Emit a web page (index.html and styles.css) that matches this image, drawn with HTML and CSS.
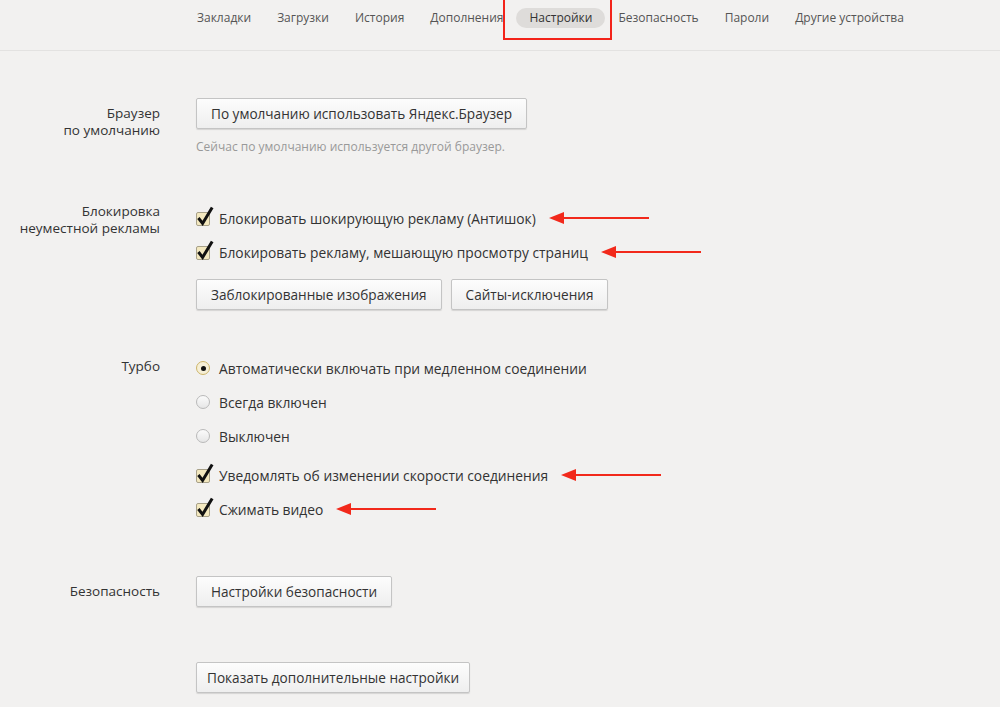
FILE: index.html
```html
<!DOCTYPE html>
<html lang="ru">
<head>
    <meta charset="UTF-8">
    <title>Настройки</title>
    <link rel="stylesheet" href="styles.css">
</head>
<body>
    <!-- Tabs -->
    <div class="tabs">
        <span class="tab">Закладки</span>
        <span class="tab">Загрузки</span>
        <span class="tab">История</span>
        <span class="tab">Дополнения</span>
        <span class="tab active">Настройки<span class="highlight"></span></span>
        <span class="tab">Безопасность</span>
        <span class="tab">Пароли</span>
        <span class="tab">Другие устройства</span>
    </div>

    <div class="settings">
        <!-- Default browser -->
        <div class="section sec-default">
            <div class="label">Браузер<br>по умолчанию</div>
            <div class="controls">
                <button class="btn">По умолчанию использовать Яндекс.Браузер</button>
                <div class="hint">Сейчас по умолчанию используется другой браузер.</div>
            </div>
        </div>

        <!-- Ad blocking -->
        <div class="section sec-ads">
            <div class="label">Блокировка<br>неуместной рекламы</div>
            <div class="controls">
                <div class="option">
                    <span class="check"><svg width="18" height="20" viewBox="0 0 18 20"><rect x="0.5" y="6.5" width="13" height="13" rx="1.5" fill="#f3e8bf" stroke="#a8a189"/><path d="M2.4 12 L6.6 17.4 L16.2 1.4" fill="none" stroke="#111" stroke-width="3"/></svg></span>
                    Блокировать шокирующую рекламу (Антишок)
                    <span class="arrow"><svg width="100" height="14" viewBox="0 0 100 14"><line x1="12" y1="7" x2="100" y2="7" stroke="#f2291b" stroke-width="2.2"/><polygon points="0,7 15,1 15,13" fill="#f2291b"/></svg></span>
                </div>
                <div class="option">
                    <span class="check"><svg width="18" height="20" viewBox="0 0 18 20"><rect x="0.5" y="6.5" width="13" height="13" rx="1.5" fill="#f3e8bf" stroke="#a8a189"/><path d="M2.4 12 L6.6 17.4 L16.2 1.4" fill="none" stroke="#111" stroke-width="3"/></svg></span>
                    Блокировать рекламу, мешающую просмотру страниц
                    <span class="arrow"><svg width="100" height="14" viewBox="0 0 100 14"><line x1="12" y1="7" x2="100" y2="7" stroke="#f2291b" stroke-width="2.2"/><polygon points="0,7 15,1 15,13" fill="#f2291b"/></svg></span>
                </div>
                <div class="btn-row">
                    <button class="btn">Заблокированные изображения</button>
                    <button class="btn">Сайты-исключения</button>
                </div>
            </div>
        </div>

        <!-- Turbo -->
        <div class="section sec-turbo">
            <div class="label">Турбо</div>
            <div class="controls">
                <div class="option"><span class="radio checked"></span>Автоматически включать при медленном соединении</div>
                <div class="option"><span class="radio"></span>Всегда включен</div>
                <div class="option"><span class="radio"></span>Выключен</div>
                <div class="option gap-top">
                    <span class="check"><svg width="18" height="20" viewBox="0 0 18 20"><rect x="0.5" y="6.5" width="13" height="13" rx="1.5" fill="#f3e8bf" stroke="#a8a189"/><path d="M2.4 12 L6.6 17.4 L16.2 1.4" fill="none" stroke="#111" stroke-width="3"/></svg></span>
                    Уведомлять об изменении скорости соединения
                    <span class="arrow"><svg width="100" height="14" viewBox="0 0 100 14"><line x1="12" y1="7" x2="100" y2="7" stroke="#f2291b" stroke-width="2.2"/><polygon points="0,7 15,1 15,13" fill="#f2291b"/></svg></span>
                </div>
                <div class="option">
                    <span class="check"><svg width="18" height="20" viewBox="0 0 18 20"><rect x="0.5" y="6.5" width="13" height="13" rx="1.5" fill="#f3e8bf" stroke="#a8a189"/><path d="M2.4 12 L6.6 17.4 L16.2 1.4" fill="none" stroke="#111" stroke-width="3"/></svg></span>
                    Сжимать видео
                    <span class="arrow"><svg width="100" height="14" viewBox="0 0 100 14"><line x1="12" y1="7" x2="100" y2="7" stroke="#f2291b" stroke-width="2.2"/><polygon points="0,7 15,1 15,13" fill="#f2291b"/></svg></span>
                </div>
            </div>
        </div>

        <!-- Security -->
        <div class="section sec-security">
            <div class="label">Безопасность</div>
            <div class="controls">
                <button class="btn">Настройки безопасности</button>
            </div>
        </div>

        <div class="section sec-more">
            <div class="label"></div>
            <div class="controls">
                <button class="btn btn-compact">Показать дополнительные настройки</button>
            </div>
        </div>
    </div>
</body>
</html>
```

FILE: styles.css
```css
/* Reset */
* {
    margin: 0;
    padding: 0;
    box-sizing: border-box;
}

body {
    background-color: #f2f1f0;
    color: #333;
    font-family: "Open Sans", "Noto Sans", sans-serif;
    font-size: 13.8px;
}

/* Tabs */
.tabs {
    display: flex;
    align-items: flex-start;
    height: 51px;
    padding: 8px 0 0 184px;
    border-bottom: 1px solid #e3e2e1;
}

.tab {
    position: relative;
    height: 20px;
    line-height: 20px;
    padding: 0 13px;
    font-size: 12px;
    color: #555;
    border-radius: 10px;
}

.tab.active {
    background-color: #dedcda;
    color: #333;
}

.highlight {
    position: absolute;
    left: -13px;
    right: -7px;
    top: -12px;
    bottom: -12px;
    border: 2px solid #f3231a;
}

/* Sections */
.settings {
    padding-bottom: 20px;
}

.section {
    display: grid;
    grid-template-columns: 160px 1fr;
    column-gap: 36px;
}

.label {
    text-align: right;
    line-height: 17px;
    font-size: 13.5px;
    color: #333;
}

.sec-default {
    margin-top: 47px;
}

.sec-default .label {
    padding-top: 7px;
}

.sec-ads {
    margin-top: 46px;
}

.sec-ads .label {
    padding-top: 2px;
}

.sec-turbo {
    margin-top: 41px;
}

.sec-turbo .label,
.sec-security .label {
    padding-top: 7px;
}

.sec-security {
    margin-top: 50px;
}

.sec-more {
    margin-top: 55px;
}

/* Buttons */
.btn {
    height: 31px;
    padding: 0 14px;
    font-family: inherit;
    font-size: 13.6px;
    color: #333;
    background: linear-gradient(#fdfdfd, #eeeeee);
    border: 1px solid #c4c4c4;
    border-radius: 2px;
    box-shadow: 0 1px 1px rgba(0, 0, 0, 0.12);
    cursor: pointer;
}

.btn-compact {
    padding: 0 10px;
}

.btn-row {
    display: flex;
    gap: 9px;
    margin-top: 10px;
}

.hint {
    margin-top: 10px;
    font-size: 12px;
    line-height: 16px;
    color: #999;
}

/* Options */
.option {
    display: flex;
    align-items: center;
    height: 34px;
}

.option.gap-top {
    margin-top: 5px;
}

.check {
    display: flex;
    width: 23px;
    margin-top: -5px;
}

.radio {
    width: 14px;
    height: 14px;
    margin-right: 9px;
    border-radius: 50%;
    border: 1px solid #b9b9b9;
    background: linear-gradient(#fbfbfb, #e6e6e6);
    position: relative;
}

.radio.checked {
    border-color: #cdb56a;
    background: #f6efd6;
}

.radio.checked::after {
    content: "";
    position: absolute;
    left: 3.5px;
    top: 3.5px;
    width: 5px;
    height: 5px;
    border-radius: 50%;
    background: #111;
}

.arrow {
    display: flex;
    margin-left: 13px;
}
```
